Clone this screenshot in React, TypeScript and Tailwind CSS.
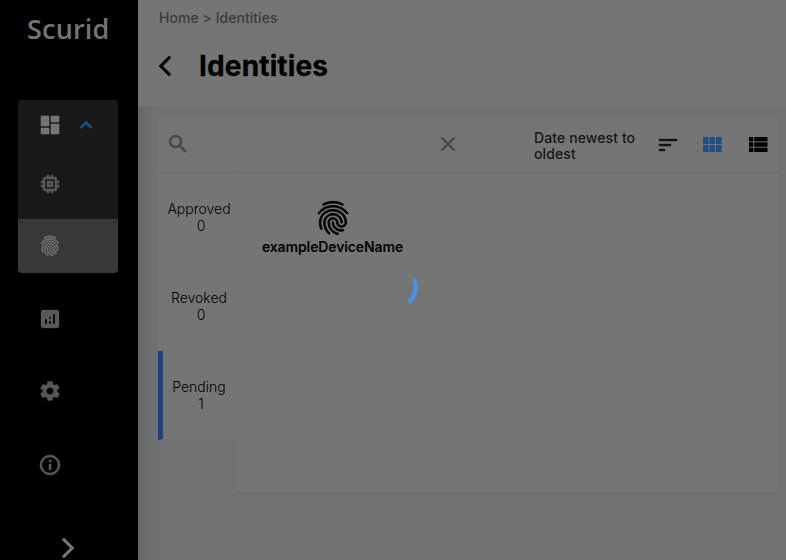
import React from 'react';
import {
  MdDashboard, MdKeyboardArrowUp, MdMemory, MdFingerprint, MdAnalytics, MdSettings,
  MdInfoOutline, MdArrowForwardIos, MdArrowBackIosNew, MdSearch, MdClose, MdSort,
} from 'react-icons/md';

const tabs = [
  { label: 'Approved', count: 0 },
  { label: 'Revoked', count: 0 },
  { label: 'Pending', count: 1 },
];

function GridIcon() {
  return (
    <svg width="19" height="15" viewBox="0 0 19 15" fill="#1e4f84">
      {[0, 6.5, 13].map((x) => [0, 8].map((y) => (
        <rect key={`${x}-${y}`} x={x} y={y} width="5.7" height="7" />
      )))}
    </svg>
  );
}

function ListIcon() {
  return (
    <svg width="19" height="15" viewBox="0 0 19 15" fill="#000">
      {[0, 5.3, 10.6].map((y) => (
        <g key={y}>
          <rect x="0" y={y} width="4.3" height="4.4" />
          <rect x="5.2" y={y} width="13.3" height="4.4" />
        </g>
      ))}
    </svg>
  );
}

function Sidebar() {
  return (
    <aside className="flex h-full w-[138px] shrink-0 flex-col bg-black text-[#585858]">
      <div className="h-[100px] pl-[27px] pt-[10px] font-['Open_Sans',sans-serif] text-[27px] font-semibold leading-[38px] tracking-[0.2px] text-[#757575]">
        Scurid
      </div>
      <nav className="mx-[18px] w-[100px] overflow-hidden rounded bg-[#181818]">
        <div className="flex h-[50px] items-center pl-5 text-[#757575]">
          <MdDashboard size={24} className="[&>path:not([fill])]:stroke-[0.6]" />
          <MdKeyboardArrowUp size={24} className="ml-3 text-[#1e4f84] [&>path:not([fill])]:stroke-[0.8]" />
        </div>
        <div className="flex h-[69px] items-center pl-5">
          <MdMemory size={24} className="-mt-px [&>path:not([fill])]:stroke-[0.5]" />
        </div>
        <div className="flex h-[54px] items-center bg-[#383838] pl-5 text-[#757575]">
          <MdFingerprint size={24} className="[&>path:not([fill])]:stroke-[0.6]" />
        </div>
      </nav>
      <div className="flex flex-col pl-[38px] pt-[34px]">
        <MdAnalytics size={24} className="[&>path:not([fill])]:stroke-[0.3]" />
        <MdSettings size={24} className="mt-12 [&>path:not([fill])]:stroke-[0.3]" />
        <MdInfoOutline size={24} className="mt-[50px] [&>path:not([fill])]:stroke-[0.5]" />
        <MdArrowForwardIos size={24} className="ml-[18px] mt-[59px] text-[#757575] [&>path:not([fill])]:stroke-[0.8]" />
      </div>
    </aside>
  );
}

export default function App() {
  return (
    <div className="relative flex h-[560px] w-[786px] overflow-hidden bg-[#6f7173] font-['Inter','Liberation_Sans',sans-serif] text-black">
      <Sidebar />
      <main className="flex min-w-0 flex-1 flex-col">
        <header className="h-[107px] border-b border-l border-[#6e6f71] bg-[#757575] pl-[14px]">
          <p className="pl-[6px] pt-[9px] text-[14px] font-medium leading-[18px] tracking-[0.04px] text-[#3b3b3b]">Home &gt; Identities</p>
          <div className="mt-[21px] flex h-9 items-center">
            <MdArrowBackIosNew size={24} className="[&>path:not([fill])]:stroke-[0.8]" />
            <h1 className="ml-[22px] text-[28px] font-bold leading-9 tracking-[0.15px] [-webkit-text-stroke:0.3px_black]">Identities</h1>
          </div>
        </header>
        <div className="flex-1 bg-[linear-gradient(90deg,#656668_0px,#696b6d_6px,#6e7072_14px,#6f7173_20px)] pl-5 pr-2 pt-[10px]">
          <section className="flex h-14 items-center border-b border-[#6b6c6d] bg-[#757575]">
            <MdSearch size={24} className="ml-2 mt-[-2px] text-[#464646] [&>path:not([fill])]:stroke-[0.5]" />
            <MdClose size={24} className="ml-[246px] mt-[-2px] text-[#464646] [&>path:not([fill])]:stroke-[0.4]" />
            <p className="ml-[74px] mt-[3px] w-[112px] text-[14px] font-medium leading-4 tracking-[0.1px] text-[#151515]">Date newest to oldest</p>
            <MdSort size={24} className="ml-[10px] text-[#151515] [&>path:not([fill])]:stroke-[0.4]" />
            <span className="ml-[23px]"><GridIcon /></span>
            <span className="ml-[27px]"><ListIcon /></span>
          </section>
          <section className="flex items-start">
            <div className="w-[78px] shrink-0 border-r border-[#707172]">
              {tabs.map((tab, i) => (
                <button
                  key={tab.label}
                  className={`block h-[89px] w-full border-b border-l-[5px] border-b-[#6f7071] bg-[#757575] text-center text-[14px] font-light leading-[17px] ${i === 2 ? 'border-l-[#1d427c]' : 'border-l-[#757575]'}`}
                >
                  {tab.label}
                  <br />
                  <span className="pl-1">{tab.count}</span>
                </button>
              ))}
            </div>
            <div className="flex h-[320px] flex-1 items-start border-b border-[#6a6b6c] bg-[#757575]">
              <figure className="ml-[26px] mt-[25px] flex w-[141px] flex-col items-center">
                <MdFingerprint size={40} className="[&>path:not([fill])]:stroke-[0.5]" />
                <figcaption className="text-[14px] font-semibold leading-[18px] tracking-[-0.12px]">exampleDeviceName</figcaption>
              </figure>
            </div>
          </section>
        </div>
      </main>
      <svg className="absolute left-[370px] top-[268px]" width="52" height="46" viewBox="0 0 52 46" fill="none">
        <path d="M44 11.2 C47.2 18.5 46.2 27.6 39 34.3" stroke="#3e96f5" strokeWidth="4" />
      </svg>
    </div>
  );
}
